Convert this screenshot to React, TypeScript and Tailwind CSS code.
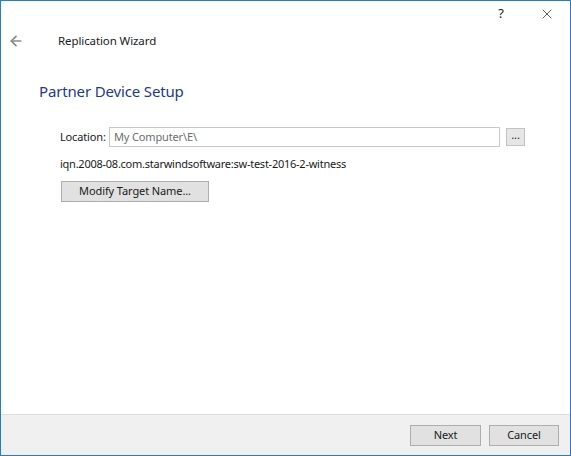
import { ArrowLeft, X } from "lucide-react";

const font = { fontFamily: '"Noto Sans", "Open Sans", sans-serif' };

function WinButton({ label, className }: { label: string; className?: string }) {
  return (
    <button
      type="button"
      className={`flex h-[21px] items-center justify-center border border-[#adadad] bg-[#e1e1e1] text-[11px] tracking-[-0.1px] text-[#1a1a1a] ${className ?? ""}`}
    >
      {label}
    </button>
  );
}

export default function App() {
  return (
    <div
      style={font}
      className="flex h-[456px] w-[571px] flex-col border border-[#2a7bbf] bg-white text-[11px] text-[#1a1a1a]"
    >
      {/* caption bar */}
      <div className="flex h-[26px] justify-end">
        <div className="flex w-[46px] items-center justify-center text-[13px] text-[#222]">?</div>
        <div className="flex w-[46px] items-center justify-center">
          <X size={16} strokeWidth={1.1} className="text-[#222]" />
        </div>
      </div>

      {/* wizard header */}
      <div className="flex h-[28px] items-center">
        <ArrowLeft size={16} strokeWidth={2.6} className="ml-[7px] text-[#8a8a8a]" />
        <span className="ml-[34px] text-[11.5px] tracking-[-0.1px] text-[#1a1a1a]">Replication Wizard</span>
      </div>

      <div className="pl-[38px]">
        <h1 className="mt-[25px] h-[22px] text-[15px] leading-[22px] tracking-[-0.15px] text-[#1d3a8a]">
          Partner Device Setup
        </h1>

        <div className="mt-[25px] flex h-[20px] items-center pl-[21px] tracking-[-0.15px]">
          <span className="w-[49px]">Location:</span>
          <div className="flex h-[20px] w-[391px] items-center border border-[#c9c9c9] pl-[4px] text-[#6d6d6d]">
            My Computer\E\
          </div>
          <button
            type="button"
            className="ml-[6px] flex h-[18px] w-[19px] items-center justify-center border border-[#c2c2c2] bg-[#e6e6e6] pb-[4px] text-[11px] text-[#222]"
          >
            ...
          </button>
        </div>

        <div className="mt-[9px] h-[16px] pl-[21px] leading-[16px] tracking-[-0.25px]">
          iqn.2008-08.com.starwindsoftware:sw-test-2016-2-witness
        </div>

        <div className="mt-[9px] pl-[22px]">
          <WinButton label="Modify Target Name..." className="h-[20px] w-[148px]" />
        </div>
      </div>

      {/* footer */}
      <div className="mt-auto flex h-[41px] items-center justify-end gap-[8px] border-t border-[#dfdfdf] bg-[#f0f0f0] pr-[11px]">
        <WinButton label="Next" className="w-[71px]" />
        <WinButton label="Cancel" className="w-[70px]" />
      </div>
    </div>
  );
}
